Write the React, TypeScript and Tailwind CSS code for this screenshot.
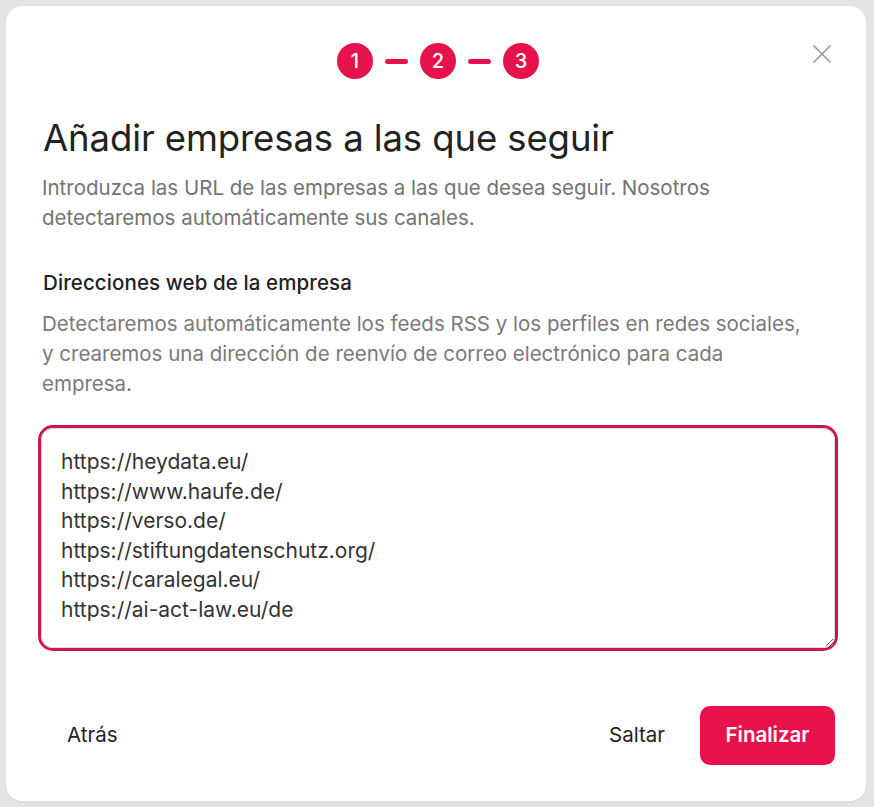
import React, { useEffect, useRef } from "react";
import { X } from "lucide-react";

const urls = [
  "https://heydata.eu/",
  "https://www.haufe.de/",
  "https://verso.de/",
  "https://stiftungdatenschutz.org/",
  "https://caralegal.eu/",
  "https://ai-act-law.eu/de",
];

function Step({ n }: { n: number }) {
  return (
    <div className="w-9 h-9 rounded-full bg-[#e5124b] text-white flex items-center justify-center text-[20px] font-medium">
      {n}
    </div>
  );
}

export default function App() {
  const ref = useRef<HTMLTextAreaElement>(null);

  useEffect(() => {
    const el = ref.current;
    if (!el) return;
    el.focus();
    el.setSelectionRange(el.value.length, el.value.length);
  }, []);

  return (
    <div className="h-screen bg-[#e4e4e4] pl-[6px] pr-[8px] py-[6px] font-['Inter',sans-serif]">
      <div className="relative h-full bg-white rounded-2xl flex flex-col pl-[35px] pr-[31px] pt-[37px] pb-9 shadow-[0_1px_3px_rgba(0,0,0,0.08)]">
        {/* Stepper */}
        <div className="flex items-center justify-center gap-3">
          <Step n={1} />
          <div className="w-[23px] h-[5px] rounded-full bg-[#e5124b]" />
          <Step n={2} />
          <div className="w-[23px] h-[5px] rounded-full bg-[#e5124b]" />
          <Step n={3} />
        </div>
        <button className="absolute top-[32px] right-[28px] text-[#9a9a9a]" aria-label="Cerrar">
          <X className="w-8 h-8" strokeWidth={1.3} />
        </button>

        {/* Header */}
        <h1 className="mt-[37px] pl-[2px] text-[36.5px] leading-[44px] text-[#222] tracking-[-0.1px]">
          Añadir empresas a las que seguir
        </h1>
        <p className="mt-[13px] pl-[1px] text-[20.5px] leading-[30px] text-[#737373]">
          Introduzca las URL de las empresas a las que desea seguir. Nosotros detectaremos automáticamente sus canales.
        </p>

        {/* Campo */}
        <label className="mt-[35px] pl-[2px] text-[20.5px] leading-[30px] font-medium text-[#222] tracking-[0.1px]">
          Direcciones web de la empresa
        </label>
        <p className="mt-[11px] pl-[1px] max-w-[770px] text-[20.5px] leading-[30px] text-[#7a7a7a]">
          Detectaremos automáticamente los feeds RSS y los perfiles en redes sociales, y crearemos una dirección de reenvío de correo electrónico para cada empresa.
        </p>

        <textarea
          ref={ref}
          defaultValue={urls.join("\n")}
          className="mt-[29px] h-[220px] w-full rounded-xl border border-[#dcdcdc] px-[19px] py-[18px] text-[21px] leading-[29.5px] text-[#333] caret-[#222] outline-none ring-[3px] ring-[#c9184a] resize-y"
        />

        {/* Acciones */}
        <div className="mt-auto flex items-center">
          <button className="px-[26px] h-[59px] text-[20.5px] text-[#222]">Atrás</button>
          <div className="ml-auto flex items-center gap-[11px]">
            <button className="px-6 h-[59px] text-[20.5px] text-[#222]">Saltar</button>
            <button className="w-[135px] h-[59px] rounded-[10px] bg-[#e8114a] text-white text-[20.5px] font-semibold">
              Finalizar
            </button>
          </div>
        </div>
      </div>
    </div>
  );
}
